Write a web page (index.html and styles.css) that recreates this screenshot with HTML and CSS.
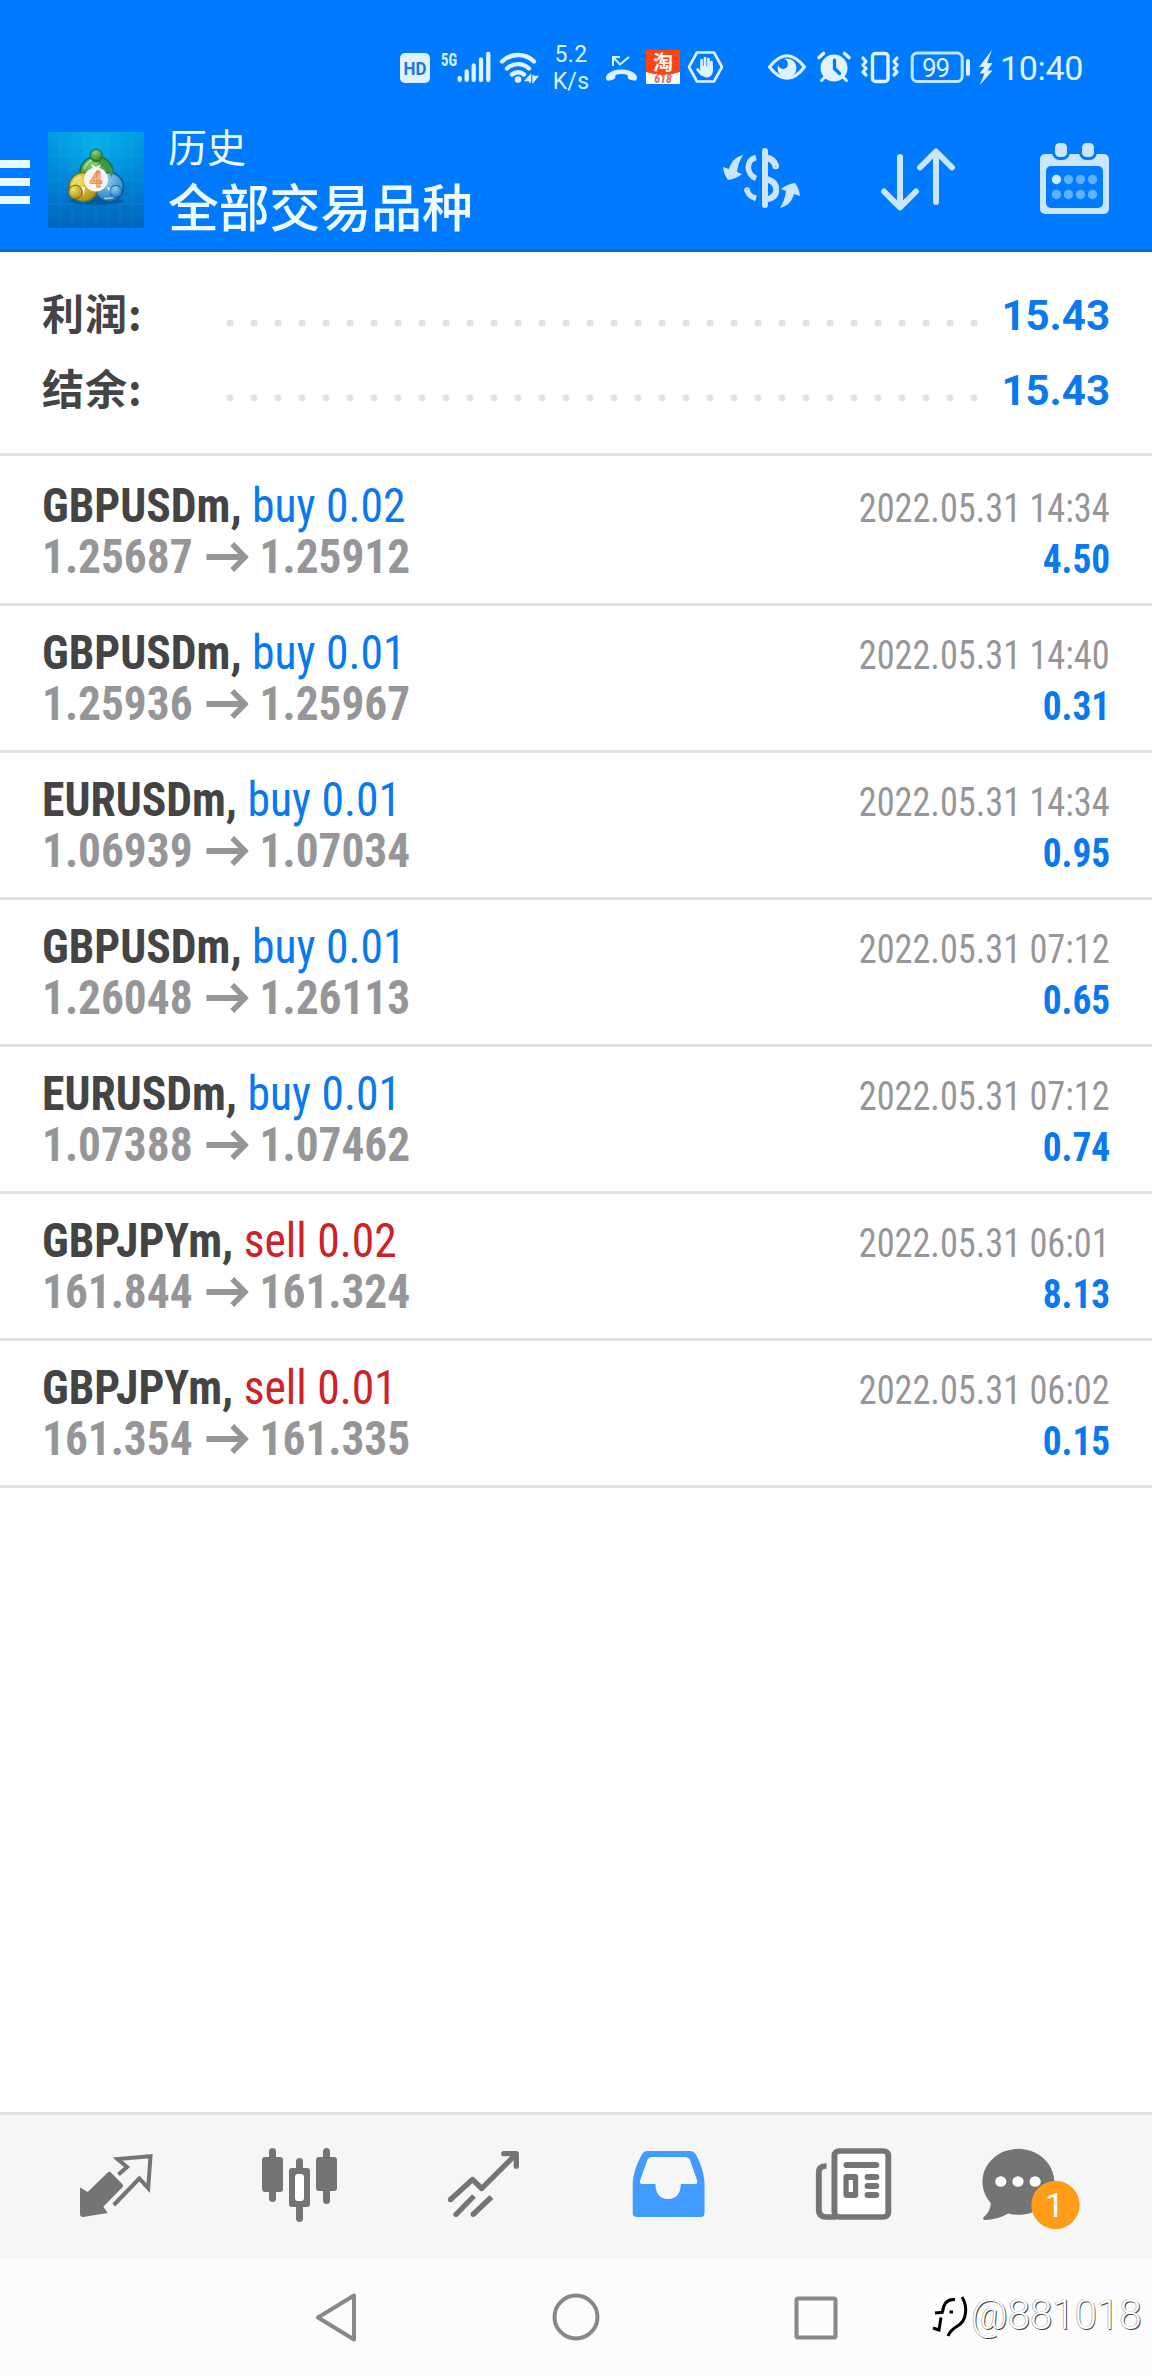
FILE: index.html
```html
<!DOCTYPE html>
<html lang="zh-CN">
<head>
<meta charset="utf-8">
<title>历史</title>
<link rel="stylesheet" href="styles.css">
</head>
<body>
<div class="screen">
  <header class="top">
    <div class="status">
      <svg class="s-hd" width="30" height="40" viewBox="400 48 30 40"><rect x="400" y="53" width="30" height="30" rx="5" fill="#def2ff"/><text x="415" y="75.300" text-anchor="middle" textLength="23" lengthAdjust="spacingAndGlyphs" class="t-hd">HD</text></svg>
      <svg class="s-sig" width="52" height="40" viewBox="440 48 52 40"><text x="441" y="65.500" textLength="16" lengthAdjust="spacingAndGlyphs" class="t-5g">5G</text><path d="M459.700 78v2M466.700 71.500v8.500M473.700 65.500v14.500M481 59.500v20.500M488.300 54v26" stroke="#def2ff" stroke-width="4.300" stroke-linecap="round"/></svg>
      <svg class="s-wifi" width="40" height="40" viewBox="499 48 40 40"><g fill="none" stroke="#def2ff" stroke-width="4.400" stroke-linecap="round"><path d="M502 61.500a23 23 0 0 1 32 0M507 68.500a16 16 0 0 1 22 0M512 74.500a9 9 0 0 1 12 0"/></g><circle cx="518" cy="79.500" r="3.300" fill="#def2ff"/><path d="M530 75v8M530.500 75l-5 5.500h5zM533 75v8M533 82l4.500-5.500H533z" stroke="#def2ff" stroke-width="1.400" fill="#def2ff"/></svg>
      <div class="speed"><span>5.2</span><span>K/s</span></div>
      <svg class="s-call" width="32" height="40" viewBox="605 48 32 40"><path d="M613 66v-9h7M613 57l7 7.500L629 57" fill="none" stroke="#def2ff" stroke-width="2"/><path d="M606 77C609 67 634 67 637 77C637 80.500 636 81 633.500 80.500L629.500 79.500C628 79 627.500 77.500 627.500 75C624 73.500 619 73.500 615.500 75C615.500 77.500 615 79 613.500 79.500L609.500 80.500C607 81 606 80.500 606 77Z" fill="#def2ff"/></svg>
      <svg class="s-tao" width="34" height="40" viewBox="646 48 34 40"><path d="M646 50h34v34h-34z" fill="#fff"/><path d="M646 50h34v22Q663 78 646 72z" fill="#ff4410"/><text x="663" y="70" text-anchor="middle" class="t-tao">淘</text><text x="663" y="83" text-anchor="middle" class="t-618">618</text></svg>
      <svg class="s-hand" width="36" height="40" viewBox="687 48 36 40"><path d="M697 52.500h17l8 14.500-8 14.500h-17L689 67z" fill="none" stroke="#def2ff" stroke-width="2.600" stroke-linejoin="round"/><path d="M701.500 60v9M705 58v9M708.500 59v9M711.500 62v9M697.500 69.500l4.500 5" stroke="#def2ff" stroke-width="2.700" stroke-linecap="round"/><path d="M700 66h13v5q-1 6-6 6.500-4 0-6-4z" fill="#def2ff"/></svg>
      <svg class="s-eye" width="38" height="40" viewBox="768 48 38 40"><path d="M769.500 67Q787 44.500 804.500 67Q787 89.500 769.500 67z" fill="none" stroke="#def2ff" stroke-width="3.200" stroke-linejoin="round"/><circle cx="787" cy="68" r="9.500" fill="#def2ff"/><circle cx="783" cy="64" r="5" fill="#007aff"/></svg>
      <svg class="s-alarm" width="36" height="40" viewBox="816 48 36 40"><circle cx="834" cy="68" r="13.500" fill="#def2ff"/><path d="M819 57.500l4.500-4M849 57.500l-4.500-4" stroke="#def2ff" stroke-width="3.600" stroke-linecap="round"/><path d="M825 77l-3.500 3.500M843 77l3.500 3.500" stroke="#def2ff" stroke-width="3" stroke-linecap="round"/><path d="M834.500 60v8.500l5 5" fill="none" stroke="#007aff" stroke-width="3.200" stroke-linecap="round"/></svg>
      <svg class="s-vib" width="40" height="40" viewBox="860 48 40 40"><rect x="872.500" y="53.500" width="15.500" height="28" rx="3" fill="none" stroke="#def2ff" stroke-width="3.400"/><path d="M863 58l3 3.500-3 3.500 3 3.500-3 3.500 3 3M897 58l-3 3.500 3 3.500-3 3.500 3 3.500-3 3" fill="none" stroke="#def2ff" stroke-width="3.200" stroke-linejoin="round" stroke-linecap="round"/></svg>
      <svg class="s-bat" width="60" height="40" viewBox="910 48 60 40"><rect x="912.200" y="53" width="50" height="28.500" rx="5" fill="none" stroke="#bfe6ff" stroke-width="3"/><path d="M968 61v13" stroke="#def2ff" stroke-width="4" stroke-linecap="round"/><text x="936" y="76.500" text-anchor="middle" textLength="28" class="t-bat">99</text></svg>
      <svg class="s-bolt" width="16" height="40" viewBox="977 48 16 40"><path d="M992 50L979 67h5.500l-5 6.500h5L979.500 85.500 992.500 70.500h-5L992.500 63H987z" fill="#def2ff"/></svg>
      <span class="clock">10:40</span>
    </div>
    <div class="bar">
      <div class="menu"><i></i><i></i><i></i></div>
      <svg class="logo" width="96" height="96" viewBox="48 132 96 96">
        <defs>
          <linearGradient id="bg" x1="0" y1="0" x2="0" y2="1"><stop offset="0" stop-color="#0098e0"/><stop offset=".5" stop-color="#0083d6"/><stop offset="1" stop-color="#0064be"/></linearGradient>
          <radialGradient id="gl" cx=".5" cy=".1" r=".55"><stop offset="0" stop-color="#08bcee" stop-opacity=".7"/><stop offset="1" stop-color="#08b8f0" stop-opacity="0"/></radialGradient>
          <radialGradient id="gr" cx=".4" cy=".25" r=".8"><stop offset="0" stop-color="#8ace6c"/><stop offset="1" stop-color="#1f7a30"/></radialGradient>
          <radialGradient id="ye" cx=".35" cy=".3" r=".8"><stop offset="0" stop-color="#f6e25c"/><stop offset="1" stop-color="#a88412"/></radialGradient>
          <radialGradient id="bl" cx=".4" cy=".25" r=".8"><stop offset="0" stop-color="#8fd2f6"/><stop offset="1" stop-color="#1d75bd"/></radialGradient>
        </defs>
        <path d="M48 132h96v96H48z" fill="url(#bg)"/><path d="M48 132h96v96H48z" fill="url(#gl)"/>
        <path d="M60 132v96M72 132v96M84 132v96M96 132v96M108 132v96M120 132v96M132 132v96M48 144h96M48 156h96M48 168h96M48 180h96M48 192h96M48 204h96M48 216h96" stroke="#5cc8f4" stroke-opacity=".12"/>
        <ellipse cx="96" cy="201" rx="27" ry="4" fill="#003f78" opacity=".45"/>
        <circle cx="96.500" cy="173" r="16.500" fill="url(#gr)" stroke="#1d6a35" stroke-width="1.500"/>
        <circle cx="109" cy="187" r="14.500" fill="url(#bl)" stroke="#14568e" stroke-width="1.500"/>
        <circle cx="83.500" cy="187" r="14.500" fill="url(#ye)" stroke="#5c7a28" stroke-width="1.500"/>
        <path d="M98 165q10 3 14 13q1-5 .5-8q-3-9-12-12z" fill="#3d9a42"/>
        <path d="M84 169q4-8 8-9M72 187q2-9 9-10M104 198q10 3 17-9" fill="none" stroke="#e8f9dc" stroke-opacity=".6" stroke-width="1.500"/>
        <path d="M91 164l5 3 5-3-5 11zM80 187l5 0-1 8zM107 187l4 1-1 6z" fill="#eef8ff"/>
        <circle cx="96.300" cy="155.500" r="6.200" fill="url(#gr)" stroke="#1d6a35"/>
        <circle cx="75.500" cy="192" r="6.800" fill="url(#ye)" stroke="#85680f"/>
        <circle cx="115.800" cy="191.500" r="6" fill="url(#bl)" stroke="#1a629f"/>
        <circle cx="96" cy="179.500" r="12" fill="#f7f4f4"/>
        <text x="96" y="187" text-anchor="middle" class="t-four">4</text>
      </svg>
      <div class="titles"><div class="t1">历史</div><div class="t2">全部交易品种</div></div>
      <svg class="i-dollar" width="80" height="76" viewBox="722 142 80 76"><g fill="none" stroke="#cbe4ff"><path d="M765 151v54" stroke-width="6" stroke-linecap="round"/><path d="M756 157.500C750 159 748.300 163.500 748.300 167.500S751 176.500 756 178.500" stroke-width="5.600"/><path d="M747 190C748 194.500 751 197 756 198.500" stroke-width="5.600"/><circle cx="747" cy="190" r="1" stroke-width="3.600"/><path d="M766 157.500C771 158.500 774.500 161 775.700 166" stroke-width="6.400"/><circle cx="775.700" cy="166" r="1.300" stroke-width="4"/><path d="M766 179C773 180.500 776.200 184.500 776.200 190S773 198.500 766 199.500" stroke-width="6"/></g><g fill="#cbe4ff"><path id="sw" d="M743 155C735 157 731 162 729 169L723 167Q724 175 728 180Q736 179 742 174L737 172Q738 163 743 155Z"/><use href="#sw" transform="rotate(180 761.500 181.500)"/></g></svg>
      <svg class="i-sort" width="76" height="76" viewBox="880 142 76 76"><path d="M900 157v49M884 191.500l16 16 16-16M936 202v-49M920 167.500l16-16 16 16" fill="none" stroke="#cbe4ff" stroke-width="6" stroke-linecap="round" stroke-linejoin="round"/></svg>
      <svg class="i-cal" width="70" height="76" viewBox="1040 142 70 76"><rect x="1040" y="154" width="69" height="60" rx="5" fill="#cbe4ff"/><rect x="1046" y="166" width="57" height="42" rx="5" fill="#007aff"/><g fill="#cbe4ff" stroke="#007aff" stroke-width="3"><rect x="1053.500" y="141.500" width="15" height="17" rx="6"/><rect x="1080.500" y="141.500" width="15" height="17" rx="6"/></g><circle cx="1056.500" cy="179.500" r="4.700" fill="#cdeaff"/><g fill="#61b0ff"><circle cx="1068.500" cy="179.500" r="4.700"/><circle cx="1080.500" cy="179.500" r="4.700"/><circle cx="1092.500" cy="179.500" r="4.700"/><circle cx="1056.500" cy="194.500" r="4.700"/><circle cx="1068.500" cy="194.500" r="4.700"/><circle cx="1080.500" cy="194.500" r="4.700"/><circle cx="1092.500" cy="194.500" r="4.700"/></g></svg>
    </div>
  </header>

  <section class="summary">
    <div class="sum-row"><span class="label">利润:</span><span class="dots"></span><span class="value">15.43</span></div>
    <div class="sum-row"><span class="label">结余:</span><span class="dots"></span><span class="value">15.43</span></div>
  </section>

  <main class="deals">
    <svg class="defs" width="0" height="0"><symbol id="arrow" viewBox="0 0 45 30"><path d="M0 15h41M27.500 2l13.500 13-13.500 13" fill="none" stroke="#969698" stroke-width="5.800"/></symbol></svg>
    <article class="deal first"><div class="line"><span class="pair"><b class="sym">GBPUSDm,</b> <span class="buy">buy 0.02</span></span><time>2022.05.31 14:34</time></div><div class="line"><b class="price">1.25687<svg><use href="#arrow"/></svg>1.25912</b><b class="profit">4.50</b></div></article>
    <article class="deal"><div class="line"><span class="pair"><b class="sym">GBPUSDm,</b> <span class="buy">buy 0.01</span></span><time>2022.05.31 14:40</time></div><div class="line"><b class="price">1.25936<svg><use href="#arrow"/></svg>1.25967</b><b class="profit">0.31</b></div></article>
    <article class="deal"><div class="line"><span class="pair"><b class="sym">EURUSDm,</b> <span class="buy">buy 0.01</span></span><time>2022.05.31 14:34</time></div><div class="line"><b class="price">1.06939<svg><use href="#arrow"/></svg>1.07034</b><b class="profit">0.95</b></div></article>
    <article class="deal"><div class="line"><span class="pair"><b class="sym">GBPUSDm,</b> <span class="buy">buy 0.01</span></span><time>2022.05.31 07:12</time></div><div class="line"><b class="price">1.26048<svg><use href="#arrow"/></svg>1.26113</b><b class="profit">0.65</b></div></article>
    <article class="deal"><div class="line"><span class="pair"><b class="sym">EURUSDm,</b> <span class="buy">buy 0.01</span></span><time>2022.05.31 07:12</time></div><div class="line"><b class="price">1.07388<svg><use href="#arrow"/></svg>1.07462</b><b class="profit">0.74</b></div></article>
    <article class="deal"><div class="line"><span class="pair"><b class="sym">GBPJPYm,</b> <span class="sell">sell 0.02</span></span><time>2022.05.31 06:01</time></div><div class="line"><b class="price">161.844<svg><use href="#arrow"/></svg>161.324</b><b class="profit">8.13</b></div></article>
    <article class="deal"><div class="line"><span class="pair"><b class="sym">GBPJPYm,</b> <span class="sell">sell 0.01</span></span><time>2022.05.31 06:02</time></div><div class="line"><b class="price">161.354<svg><use href="#arrow"/></svg>161.335</b><b class="profit">0.15</b></div></article>
  </main>

  <nav class="tabs">
    <svg width="84" height="84" viewBox="74 2143 84 84"><path d="M80 2187.500l7.700 4.500 20-19.500q1.600-1.500 3.200 0l11.500 11.700q1.500 1.500 0 3L103.300 2206.700l4.400 6.300-24.700 4q-3 0-3-3z" fill="#747474"/><path d="M118.500 2174.500l8.500-7.500-9.500-8 33-2.800-2.300 32-8.900-9.700-25.500 26.500" fill="none" stroke="#747474" stroke-width="4"/></svg>
    <svg width="84" height="84" viewBox="258 2143 84 84" fill="#747474"><rect x="262" y="2157" width="21" height="35" rx="3"/><rect x="269" y="2148" width="7" height="54" rx="3.500"/><rect x="316" y="2157" width="21" height="34" rx="3"/><rect x="323" y="2148" width="7" height="56" rx="3.500"/><rect x="296" y="2158" width="7" height="64" rx="3.500"/><rect x="289" y="2168" width="21" height="39" rx="3"/><rect x="295" y="2174" width="9" height="27" rx="3" fill="#fff"/></svg>
    <svg width="84" height="84" viewBox="442 2143 84 84" fill="none" stroke="#747474" stroke-width="5.300"><path d="M450.500 2199.500l22-20 9.200 9 34.500-34.500" stroke-linejoin="round"/><path d="M503.800 2153.700h12.500v12.500" stroke-linecap="round" stroke-linejoin="round"/><path d="M456 2214.500l18-18.500M473 2214.500l18.500-17.500"/><g stroke-linecap="round"><path d="M450.500 2199.500h0M456 2214.300h0M473.200 2214.300h0"/></g></svg>
    <svg width="84" height="84" viewBox="626 2143 84 84"><path transform="matrix(1.0561 0 0 1 -33.670 0)" fill="#429bff" fill-rule="evenodd" d="M631 2183C631.500 2173 635.500 2162 640 2154q1.500-3 5-3h40q3.500 0 5.500 3C695 2162 698.500 2173 699 2183v30q0 4-4 4h-60q-4 0-4-4zM649 2157q-3 0-4 2.500l-7 21q-.8 3.500 2 3.500h12.500c0 9 4 15 12 15s12-6 12-15h13.500q2.800 0 2-3.500l-7-21q-1.300-2.500-4-2.500z"/></svg>
    <svg width="84" height="84" viewBox="810 2143 84 84"><g transform="matrix(1.0561 0 0 1 -34.200 0)"><rect x="822.500" y="2151" width="51" height="66" rx="4.500" fill="#fff" stroke="#747474" stroke-width="5.600"/><path d="M815 2166q-7.300 0-7.300 6v38q0 7 7.300 7h9" fill="none" stroke="#747474" stroke-width="5.600"/><g fill="#747474"><rect x="831" y="2162" width="34" height="6" rx="3"/><rect x="831" y="2174" width="14" height="24" rx="3"/><rect x="851" y="2174" width="14" height="6" rx="3"/><rect x="851" y="2183" width="14" height="6" rx="3"/><rect x="851" y="2192" width="14" height="6" rx="3"/></g><rect x="836" y="2180" width="4" height="12" fill="#fff"/></g></svg>
    <svg class="chat" width="104" height="90" viewBox="978 2143 104 90"><g transform="matrix(1.0561 0 0 1 -33.670 0)"><path d="M970 2203A34 33 0 1 1 986.500 2213.500Q976 2220 964.500 2220q-3-.5-1-3Q970 2211 970 2203z" fill="#747474"/><g fill="#fff"><circle cx="979.500" cy="2181.500" r="5.300"/><circle cx="995.800" cy="2181.500" r="5.300"/><circle cx="1012" cy="2181.500" r="5.300"/></g></g><circle cx="1055.500" cy="2205" r="24.200" fill="#ff9d1b"/><text x="1054.500" y="2217" text-anchor="middle" class="t-badge">1</text></svg>
  </nav>

  <footer class="sys">
    <svg width="60" height="60" viewBox="306 2287 60 60"><path d="M318 2317.500l36-22v44z" fill="none" stroke="#888" stroke-width="4" stroke-linejoin="round"/></svg>
    <svg width="60" height="60" viewBox="546 2287 60 60"><circle cx="576" cy="2317" r="21.500" fill="none" stroke="#888" stroke-width="4"/></svg>
    <svg width="60" height="60" viewBox="786 2287 60 60"><rect x="796.500" y="2298.500" width="39" height="39" rx="1.500" fill="none" stroke="#888" stroke-width="4"/></svg>
    <div class="mark"><svg width="40" height="50" viewBox="930 2292 40 50"><circle cx="950" cy="2315" r="20" fill="#fff"/><path d="M955 2301.500q-11-1-12.500 12.500M935 2315l8.500-.8M941 2319.500l-2 12.500-6-2M949.500 2314h3.500M962 2299q4.500 7 3.500 16t-8 13-9.500 10" fill="none" stroke="#000" stroke-width="3"/></svg><span>@881018</span></div>
  </footer>
</div>
</body>
</html>
```
FILE: styles.css
```css
* { box-sizing: border-box; }
body { margin: 0; background: #fff; font-family: Roboto, "Noto Sans CJK SC", sans-serif; }
svg { display: block; flex: none; }
.screen { width: 1152px; height: 2376px; display: flex; flex-direction: column; overflow: hidden; }

.top { height: 252px; background: #007aff; border-bottom: 3px solid #1268cf; }
.status { height: 110px; display: flex; align-items: flex-start; padding-top: 48px; color: #def2ff; }
.s-hd { margin-left: 400px; }
.s-sig { margin-left: 10px; }
.s-wifi { margin-left: 7px; }
.speed { width: 60px; margin: -7px 4px 0 2px; height: 54px; display: flex; flex-direction: column; align-items: center; font-size: 23px; line-height: 27px; letter-spacing: .3px; }
.s-tao { margin-left: 9px; }
.s-hand { margin-left: 7px; }
.s-eye { margin-left: 45px; }
.s-alarm { margin-left: 10px; }
.s-vib { margin-left: 8px; }
.s-bat { margin-left: 10px; }
.s-bolt { margin-left: 7px; }
.clock { margin-left: 7px; font-size: 34px; line-height: 40px; letter-spacing: -.3px; }
.t-hd { font: bold 19px Roboto; fill: #1b78dc; }
.t-5g { font: bold 19px "Roboto Condensed"; fill: #def2ff; }
.t-tao { font: bold 20px "Noto Sans CJK SC", sans-serif; fill: #fff; }
.t-618 { font: italic bold 12px "Roboto Condensed"; fill: #d86a50; }
.t-bat { font: 26px Roboto; fill: #def2ff; }
.t-four { font: bold 22px Roboto; fill: #f9c08e; stroke: #e28344; stroke-width: .8px; }
.t-badge { font: 34px Roboto; fill: #fff; }

.bar { height: 139px; display: flex; align-items: flex-start; }
.menu { width: 30px; margin-top: 50px; display: flex; flex-direction: column; gap: 10px; }
.menu i { height: 8px; background: #e8f8ff; }
.logo { margin: 22px 0 0 18px; }
.titles { margin: 10px 0 0 24px; width: 554px; color: #eefcff; font-family: "Noto Sans CJK SC", sans-serif; }
.t1 { font-size: 39px; line-height: 50px; }
.t2 { font-size: 50.800px; line-height: 70px; font-weight: 500; }
.i-dollar, .i-sort, .i-cal { margin-top: 32px; }
.i-sort { margin-left: 78px; }
.i-cal { margin-left: 84px; }

.summary { height: 204px; padding: 22px 42px 0; border-bottom: 3px solid #e2e2e2; }
.sum-row { height: 75px; display: flex; align-items: baseline; font-weight: bold; font-size: 42px; line-height: 75px; }
.label { width: 176px; color: #444; font-family: "Noto Sans CJK SC", sans-serif; letter-spacing: 1px; }
.dots { align-self: flex-start; width: 768px; height: 8px; margin-top: 45px; background: radial-gradient(circle at center, #e2e2e2 3px, transparent 4px) 0 0 / 24px 8px; }
.value { margin-left: auto; color: #0a78ee; }

.deals { flex: 1; font-family: "Roboto Condensed"; }
.defs { position: absolute; }
.deal { height: 147px; padding: 21px 42px 0; border-bottom: 3px solid #e2e2e2; }
.deal.first { height: 150px; padding-top: 24px; }
.line { height: 51px; display: flex; justify-content: space-between; align-items: baseline; font-size: 48px; line-height: 51px; white-space: nowrap; }
.pair { transform: scaleX(.95); transform-origin: left; }
.sym { color: #444; }
.buy { color: #0a78ee; }
.sell { color: #cc2228; }
.line time { font-size: 40px; color: #969698; transform: scaleX(.907); transform-origin: right; }
.price { color: #969698; transform: scaleX(.944); transform-origin: left; }
.price svg { display: inline-block; width: 45px; height: 30px; margin: 0 12px 0 14px; vertical-align: 1px; }
.profit { font-size: 40px; color: #0a78ee; transform: scaleX(.935); transform-origin: right; }

.tabs { height: 147px; background: #f6f6f6; border-top: 3px solid #e0e0e0; display: flex; gap: 100px; padding: 28px 0 0 74px; }
.tabs .chat { margin-left: -16px; }

.sys { height: 117px; background: #fcfcfc; display: flex; gap: 180px; padding: 28px 0 0 306px; }
.mark { width: 212px; margin-left: -96px; margin-top: 3px; display: flex; gap: 1px; color: #fff; }
.mark span { font-size: 43px; font-weight: 300; line-height: 48px; text-shadow: 1px 1px 0 #444, -.5px -.5px 0 #888; transform: scaleX(.935); transform-origin: left; }
```
